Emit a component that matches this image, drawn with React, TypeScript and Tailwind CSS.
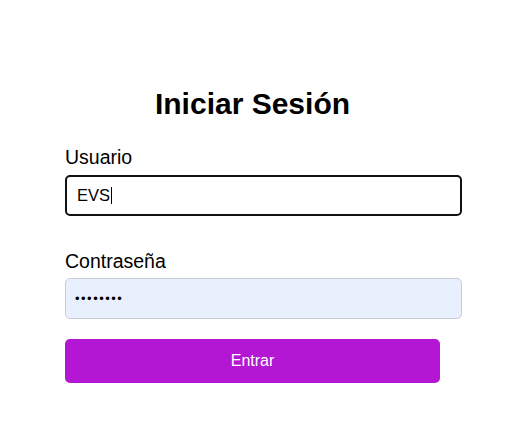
import React from "react";

export default function App() {
  return (
    <div className="min-h-[430px] w-full bg-white text-black" style={{ fontFamily: '"Liberation Sans", Arial, sans-serif' }}>
      <div className="mx-auto w-[375px] pt-[86px]">
        <h1 className="text-center text-[30px] font-bold leading-[36px]">Iniciar Sesión</h1>
        <label className="mt-[24px] block text-[19.5px] leading-[22px]">Usuario</label>
        <div className="mt-[7px] flex h-[41px] w-[397px] items-center rounded-[5px] border-2 border-[#111] pl-[10px] text-[16.5px]">
          <span>EVS</span>
          <span className="ml-[1px] inline-block h-[17px] w-[1px] bg-black" />
        </div>
        <label className="mt-[34px] block text-[19.5px] leading-[22px]">Contraseña</label>
        <div className="mt-[6px] flex h-[41px] w-[397px] items-center rounded-[5px] border border-[#c9cdd3] bg-[#e8f0fe] pl-[9px] text-[13px] tracking-[1.5px]">
          <span>••••••••</span>
        </div>
        <button className="mt-[20px] flex h-[44px] w-[375px] items-center justify-center rounded-[5px] bg-[#b417d3] text-[16px] text-white">
          Entrar
        </button>
      </div>
    </div>
  );
}
